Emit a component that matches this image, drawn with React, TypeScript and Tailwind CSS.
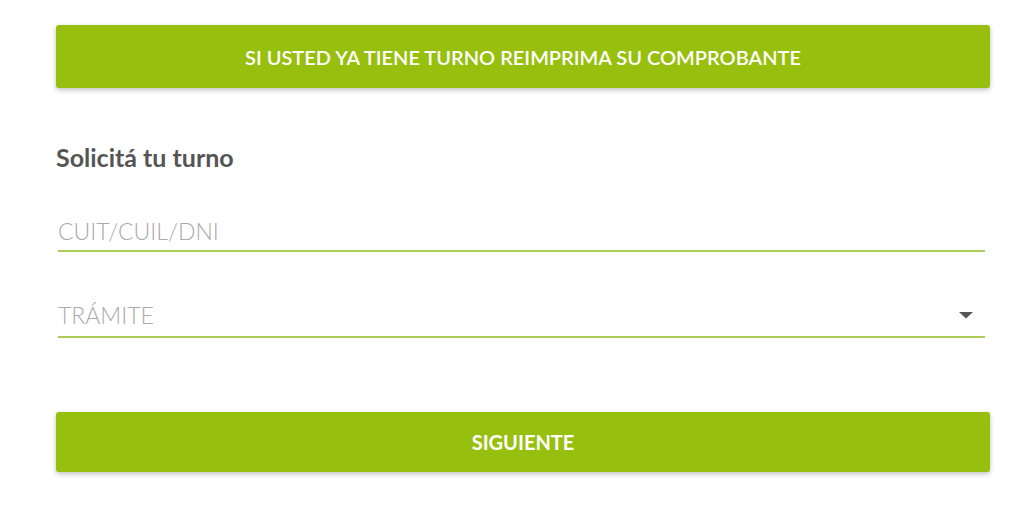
import React from "react";

const App = () => {
  return (
    <div
      className="min-h-[512px] w-full bg-white pl-[56px] pr-[34px] pt-[25px]"
      style={{ fontFamily: "Lato, 'Open Sans', sans-serif" }}
    >
      <button className="flex h-[63px] w-full items-center justify-center rounded-[3px] bg-[#97bf0d] text-[20px] font-semibold text-white shadow-[0_2px_5px_rgba(0,0,0,0.25)]">
        SI USTED YA TIENE TURNO REIMPRIMA SU COMPROBANTE
      </button>

      <h2 className="mt-[54px] text-[25px] font-bold leading-[30px] text-[#555]">Solicitá tu turno</h2>

      <div className="ml-[2px] mr-[5px] mt-[45px] border-b-2 border-[#a9cf5a] pb-[5px]">
        <span className="block text-[23px] font-light leading-[28px] text-[#aaa]">CUIT/CUIL/DNI</span>
      </div>

      <div className="ml-[2px] mr-[5px] mt-[49px] flex items-center justify-between border-b-2 border-[#a9cf5a] pb-[7px]">
        <span className="block text-[23px] font-light leading-[28px] text-[#aaa]">TRÁMITE</span>
        <svg width="16" height="8" viewBox="0 0 16 8" className="mr-[11px]">
          <path d="M1 1h14L8 7.5z" fill="#555" />
        </svg>
      </div>

      <button className="mt-[74px] flex h-[60px] w-full items-center justify-center rounded-[3px] bg-[#97bf0d] text-[20px] font-bold text-white shadow-[0_2px_5px_rgba(0,0,0,0.25)]">
        SIGUIENTE
      </button>
    </div>
  );
};

export default App;
